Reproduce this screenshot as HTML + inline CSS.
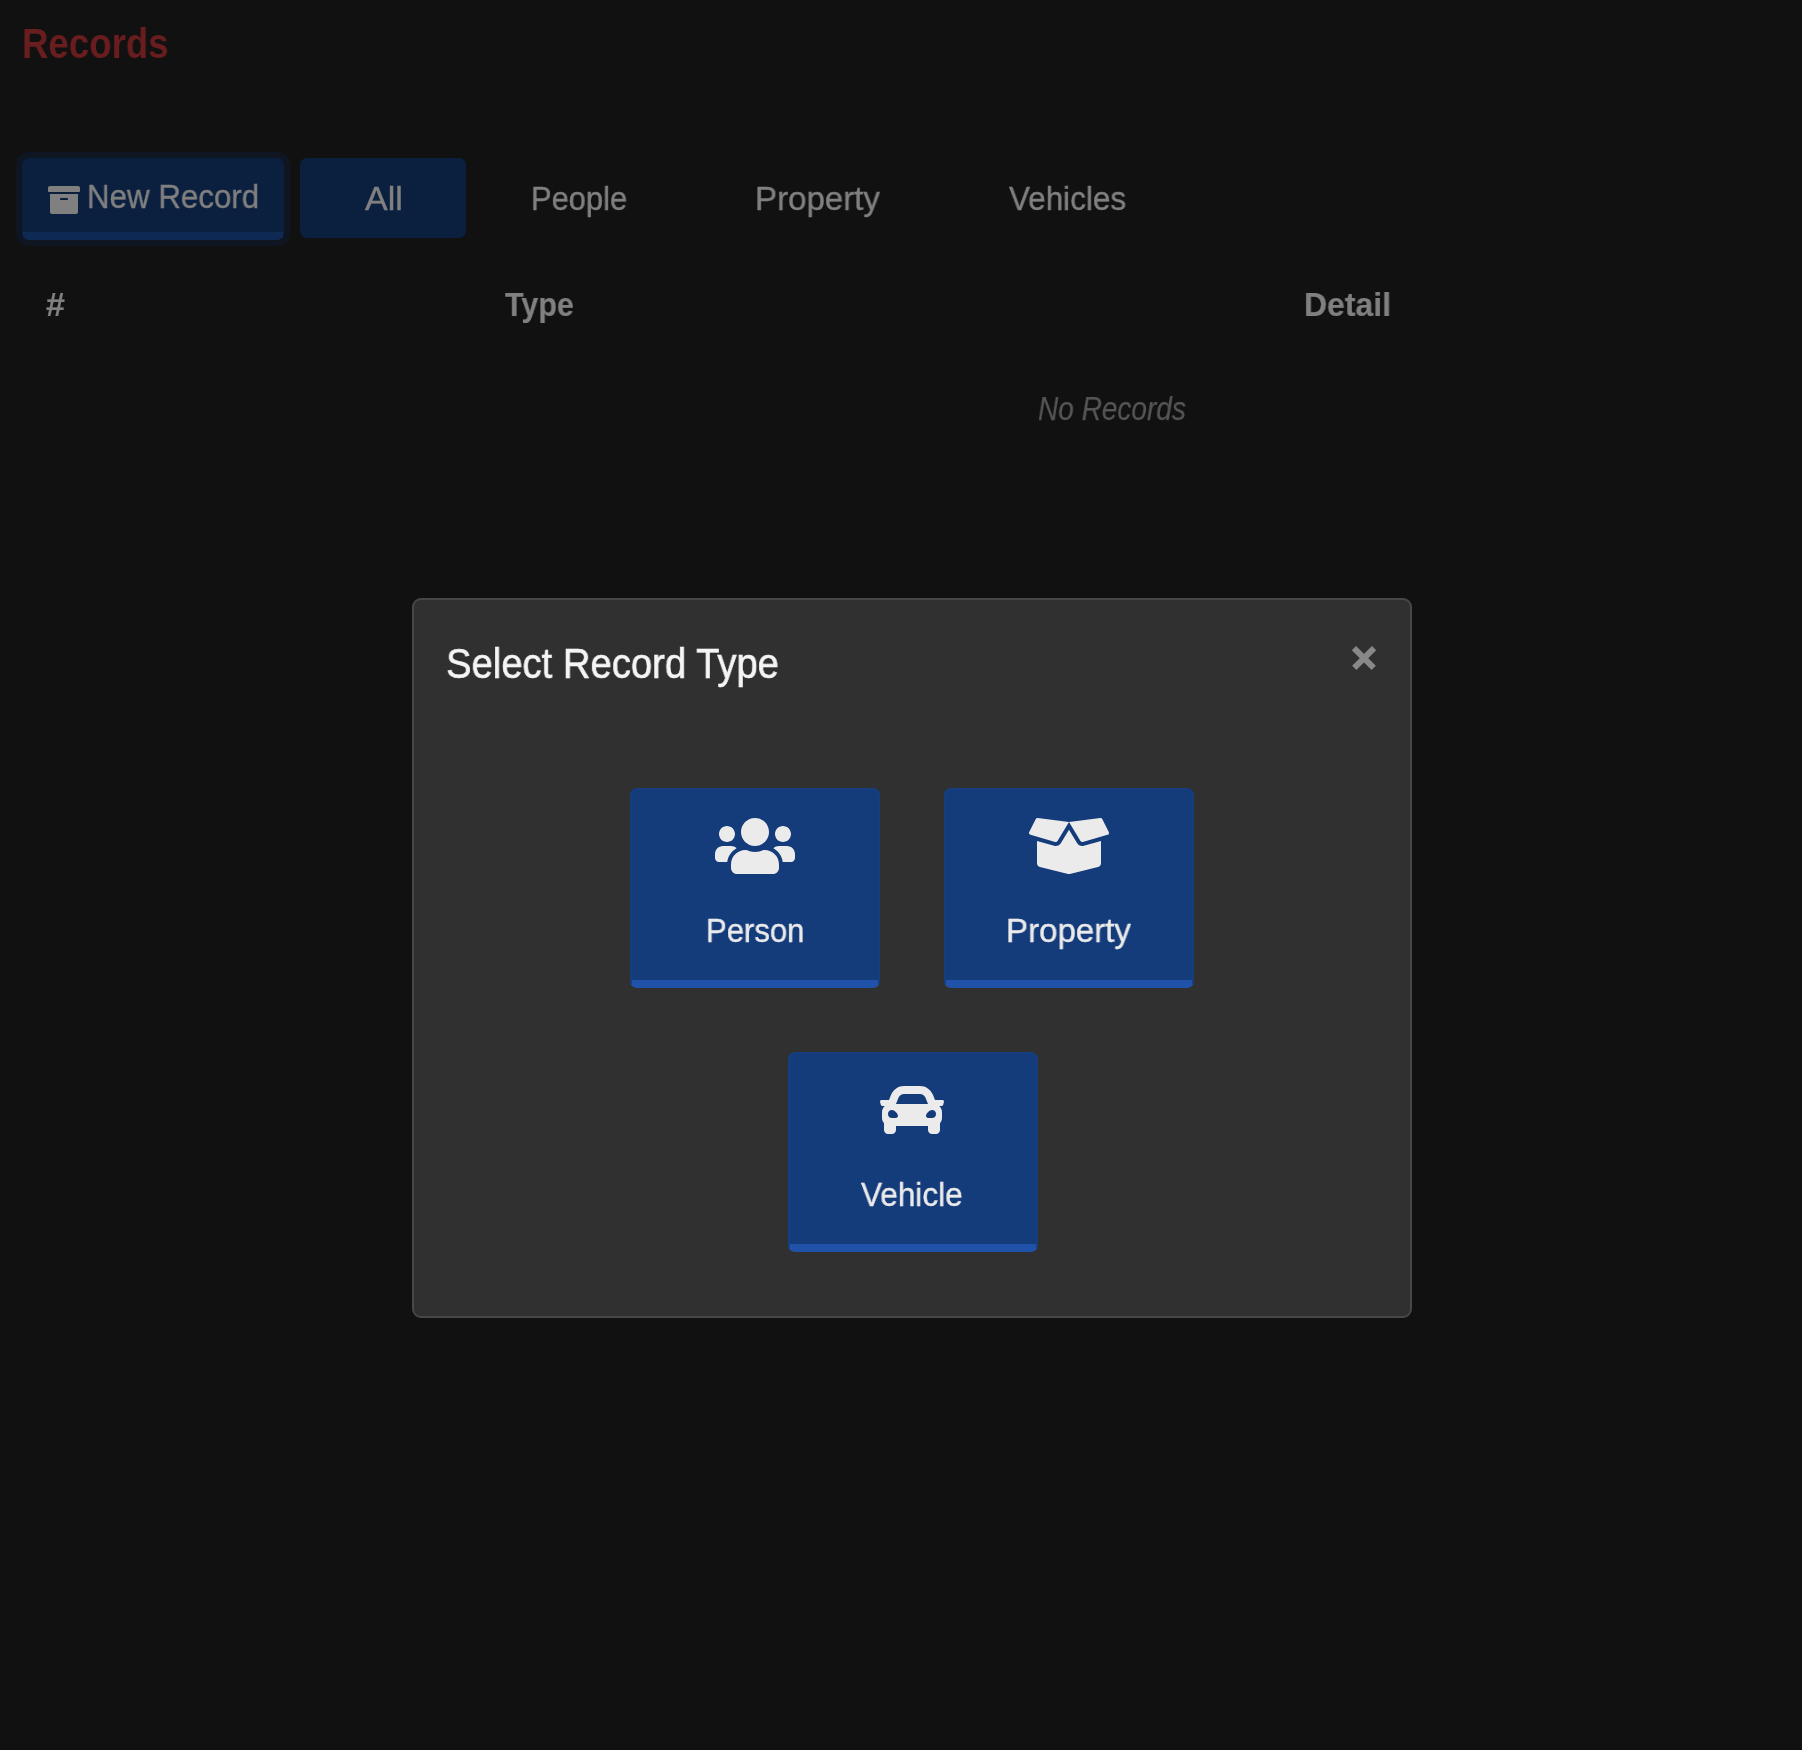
<!DOCTYPE html>
<html>
<head>
<meta charset="utf-8">
<style>
html,body{margin:0;padding:0;}
body{width:1802px;height:1750px;background:#111111;position:relative;overflow:hidden;font-family:"Liberation Sans",sans-serif;}
.t{position:absolute;white-space:nowrap;line-height:1;transform-origin:0 0;will-change:transform;-webkit-text-stroke:0.4px currentColor;}
.nav{color:#808080;font-size:34px;}
.hd{color:#808080;font-size:34px;font-weight:bold;-webkit-text-stroke:0.2px currentColor;}
#ring{position:absolute;left:16px;top:152px;width:274px;height:94px;border-radius:12px;background:#0f1621;}
#newrec{position:absolute;left:22px;top:158px;width:262px;height:82px;box-sizing:border-box;border-radius:7px;background:#0b1f3f;border:1px solid #0b1f3f;border-bottom:8px solid #0f2955;}
#allbtn{position:absolute;left:300px;top:158px;width:166px;height:80px;border-radius:7px;background:#0b1f3f;}
#modal{position:absolute;left:412px;top:598px;width:1000px;height:720px;box-sizing:border-box;border:2px solid #474747;border-radius:9px;background:#303030;}
.rb{position:absolute;width:250px;height:200px;box-sizing:border-box;border-radius:7px;background:#143b7a;border:2px solid #143e80;border-bottom:8px solid #1f52a8;}
.lbl{color:#ebebeb;font-size:34px;}
svg{position:absolute;display:block;}
#x1,#x2{position:absolute;left:1350px;top:654.75px;width:28px;height:5.5px;background:#888888;}
#x1{transform:rotate(45deg);} #x2{transform:rotate(-45deg);}
</style>
</head>
<body>
<div class="t" style="transform:scaleX(0.851);left:22px;top:21.5px;font-size:43px;font-weight:bold;color:#691d1f;-webkit-text-stroke:0;">Records</div>

<div id="ring"></div>
<div id="newrec"></div>
<svg style="left:47.9px;top:183.8px;" width="32" height="32" viewBox="0 0 512 512"><path fill="#808080" d="M32 448c0 17.7 14.3 32 32 32h384c17.7 0 32-14.3 32-32V160H32v288zm160-212c0-6.6 5.4-12 12-12h104c6.6 0 12 5.4 12 12v8c0 6.6-5.4 12-12 12H204c-6.6 0-12-5.4-12-12v-8zM480 32H32C14.3 32 0 46.3 0 64v48c0 8.8 7.2 16 16 16h480c8.8 0 16-7.2 16-16V64c0-17.7-14.3-32-32-32z"/></svg>
<div class="t nav" style="transform:scaleX(0.92);left:87px;top:179px;">New Record</div>
<div id="allbtn"></div>
<div class="t nav" style="left:364.5px;top:181px;">All</div>
<div class="t nav" style="transform:scaleX(0.908);left:531px;top:181px;">People</div>
<div class="t nav" style="transform:scaleX(0.972);left:755px;top:181px;">Property</div>
<div class="t nav" style="transform:scaleX(0.924);left:1008.5px;top:181px;">Vehicles</div>

<div class="t hd" style="left:46px;top:287px;">#</div>
<div class="t hd" style="transform:scaleX(0.895);left:505px;top:287px;">Type</div>
<div class="t hd" style="transform:scaleX(0.939);left:1304px;top:287px;">Detail</div>

<div class="t" style="transform:scaleX(0.824);left:1038px;top:391px;font-size:34px;font-style:italic;color:#555555;-webkit-text-stroke:0.25px currentColor;">No Records</div>

<div id="modal"></div>
<div class="t" style="transform:scaleX(0.889);left:445.5px;top:642px;font-size:43px;color:#f5f5f5;-webkit-text-stroke:0.6px currentColor;">Select Record Type</div>
<div id="x1"></div><div id="x2"></div>

<div class="rb" style="left:630px;top:788px;"></div>
<div class="rb" style="left:944px;top:788px;"></div>
<div class="rb" style="left:788px;top:1052px;"></div>

<svg style="left:715px;top:813.7px;" width="80" height="64" viewBox="0 0 640 512"><path fill="#ebebeb" d="M96 224c35.3 0 64-28.7 64-64s-28.7-64-64-64-64 28.7-64 64 28.7 64 64 64zm448 0c35.3 0 64-28.7 64-64s-28.7-64-64-64-64 28.7-64 64 28.7 64 64 64zm32 32h-64c-17.6 0-33.5 7.1-45.1 18.6 40.3 22.1 68.9 62 75.1 109.4h66c17.7 0 32-14.3 32-32v-32c0-35.3-28.7-64-64-64zm-256 0c61.9 0 112-50.1 112-112S381.9 32 320 32 208 82.1 208 144s50.1 112 112 112zm76.8 32h-8.3c-20.8 10-43.9 16-68.5 16s-47.6-6-68.5-16h-8.3C179.6 288 128 339.6 128 403.2V432c0 26.5 21.5 48 48 48h288c26.5 0 48-21.5 48-48v-28.8c0-63.6-51.6-115.2-115.2-115.2zm-223.7-13.4C161.5 263.1 145.6 256 128 256H64c-35.3 0-64 28.7-64 64v32c0 17.7 14.3 32 32 32h65.9c6.3-47.4 34.9-87.3 75.2-109.4z"/></svg>
<div class="t lbl" style="transform:scaleX(0.913);left:706px;top:913px;">Person</div>

<svg style="left:1029px;top:813.7px;" width="80" height="64" viewBox="0 0 640 512"><path fill="#ebebeb" d="M425.7 256c-16.9 0-32.8-9-41.4-23.4L320 126l-64.2 106.6c-8.7 14.5-24.6 23.5-41.5 23.5-4.5 0-9-.6-13.3-1.9L64 215v178c0 14.7 10 27.5 24.2 31l216.2 54.1c10.2 2.5 20.9 2.5 31 0L551.8 424c14.2-3.6 24.2-16.4 24.2-31V215l-137 39.1c-4.3 1.3-8.8 1.9-13.3 1.9zm212.6-112.2L586.8 41c-3.1-6.2-9.8-9.8-16.7-8.9L320 64l91.7 152.1c3.8 6.3 11.4 9.3 18.5 7.3l197.9-56.5c9.9-2.9 14.7-13.9 10.2-23.1zM53.2 41L1.7 143.8c-4.6 9.2.3 20.2 10.1 23l197.9 56.5c7.1 2 14.7-1 18.5-7.3L320 64 69.8 32.1c-6.9-.8-13.5 2.7-16.6 8.9z"/></svg>
<div class="t lbl" style="transform:scaleX(0.972);left:1006px;top:913px;">Property</div>

<svg style="left:880px;top:1077.8px;" width="64" height="64" viewBox="0 0 512 512"><path fill="#ebebeb" d="M499.99 176h-59.87l-16.64-41.6C406.38 91.63 365.57 64 319.5 64h-127c-46.06 0-86.88 27.630-103.99 70.4L71.87 176H12.01C4.2 176-1.53 183.34.37 190.91l6 24C7.7 220.25 12.5 224 18.010 224h20.07C24.65 235.73 16 252.78 16 272v48c0 16.12 6.16 30.67 16 41.93V416c0 17.67 14.33 32 32 32h32c17.67 0 32-14.33 32-32v-32h256v32c0 17.67 14.33 32 32 32h32c17.670 0 32-14.33 32-32v-54.07c9.84-11.25 16-25.8 16-41.93v-48c0-19.22-8.65-36.27-22.07-48H494c5.51 0 10.31-3.75 11.64-9.09l6-24c1.89-7.57-3.84-14.91-11.65-14.91zm-352.06-17.83c7.29-18.22 24.94-30.17 44.57-30.17h127c19.63 0 37.28 11.95 44.57 30.17L384 208H128l19.930-49.83zM96 319.8c-19.2 0-32-12.76-32-31.9S76.8 256 96 256s48 28.71 48 47.85-28.8 15.95-48 15.95zm320 0c-19.2 0-48 3.19-48-15.95S396.8 256 416 256s32 12.760 32 31.9-12.8 31.9-32 31.9z"/></svg>
<div class="t lbl" style="transform:scaleX(0.927);left:861px;top:1177px;">Vehicle</div>
</body>
</html>
